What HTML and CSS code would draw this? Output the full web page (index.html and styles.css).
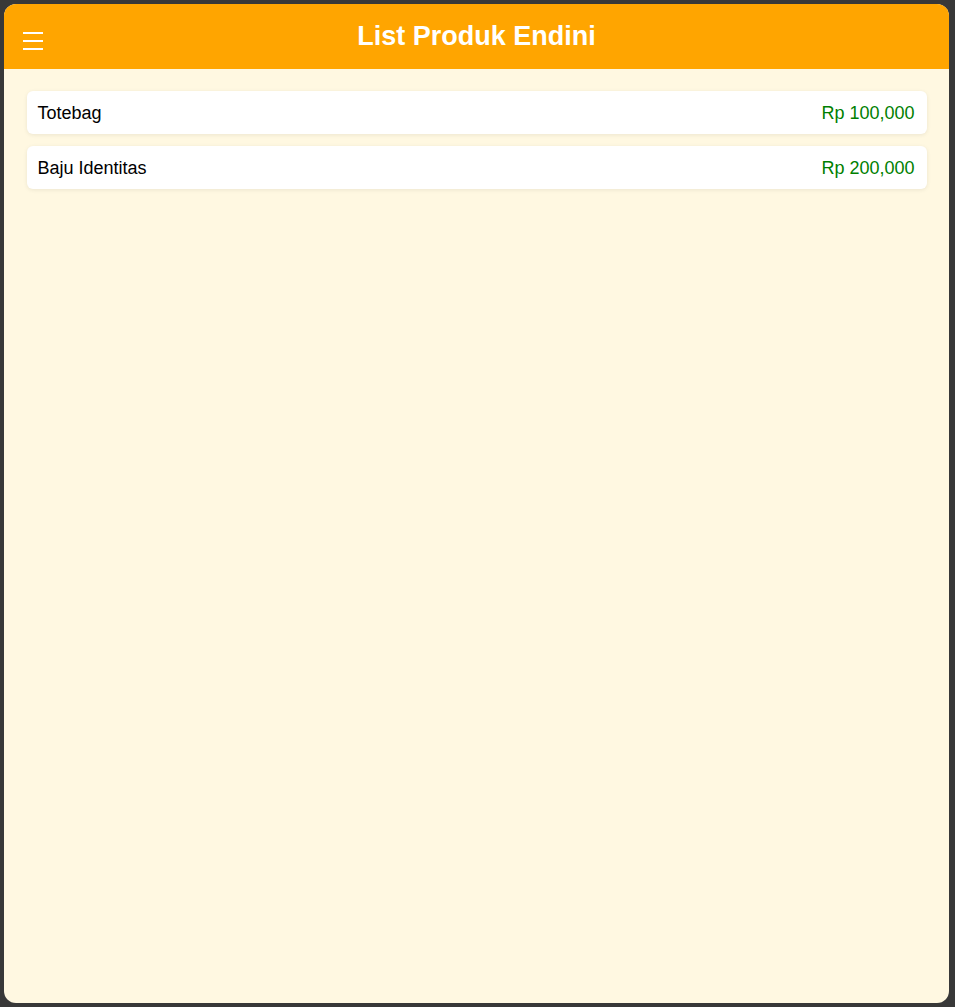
FILE: index.html
```html
<!DOCTYPE html>
<html lang="id">
<head>
<meta charset="utf-8">
<title>List Produk Endini</title>
<link rel="stylesheet" href="styles.css">
</head>
<body>
<div class="app">
  <header class="topbar">
    <button class="menu" aria-label="Menu">
      <svg width="20" height="20" viewBox="0 0 20 20" aria-hidden="true">
        <rect x="0" y="1" width="20" height="2" fill="#fff"/>
        <rect x="0" y="9" width="20" height="2" fill="#fff"/>
        <rect x="0" y="17" width="20" height="2" fill="#fff"/>
      </svg>
    </button>
    <h1 class="title">List Produk Endini</h1>
    <span class="spacer"></span>
  </header>
  <main class="content">
    <ul class="list">
      <li class="item"><span class="name">Totebag</span><span class="price">Rp 100,000</span></li>
      <li class="item"><span class="name">Baju Identitas</span><span class="price">Rp 200,000</span></li>
    </ul>
  </main>
</div>
</body>
</html>
```

FILE: styles.css
```css
html, body {
  margin: 0;
  padding: 0;
  height: 100%;
}
body {
  background: #383838;
  padding: 4px 6px 4px 4px;
  box-sizing: border-box;
  font-family: "Liberation Sans", Arial, sans-serif;
}
.app {
  height: 999px;
  width: 945px;
  background: #FFF8E1;
  border-radius: 12px;
  overflow: hidden;
  display: flex;
  flex-direction: column;
}
.topbar {
  height: 65px;
  flex: none;
  background: #FFA500;
  display: grid;
  grid-template-columns: 1fr auto 1fr;
  align-items: center;
  padding: 0 19px;
}
.menu {
  justify-self: start;
  background: none;
  border: 0;
  padding: 0;
  margin-top: 8px;
  width: 20px;
  height: 20px;
  display: block;
}
.menu svg { display: block; }
.title {
  margin: 0;
  color: #fff;
  font-size: 27px;
  font-weight: bold;
  line-height: 30px;
  margin-top: -1px;
}
.content {
  flex: 1;
  padding: 22px 0;
}
.list {
  list-style: none;
  margin: 0 auto;
  padding: 0;
  max-width: 900px;
  display: flex;
  flex-direction: column;
  gap: 12px;
}
.item {
  background: #fff;
  border-radius: 6px;
  box-shadow: 0 1px 4px rgba(0, 0, 0, 0.08);
  padding: 12px 12px 10px 11px;
  display: flex;
  justify-content: space-between;
  font-size: 18px;
  line-height: 21px;
}
.name { color: #000; }
.price { color: #008000; }
```
